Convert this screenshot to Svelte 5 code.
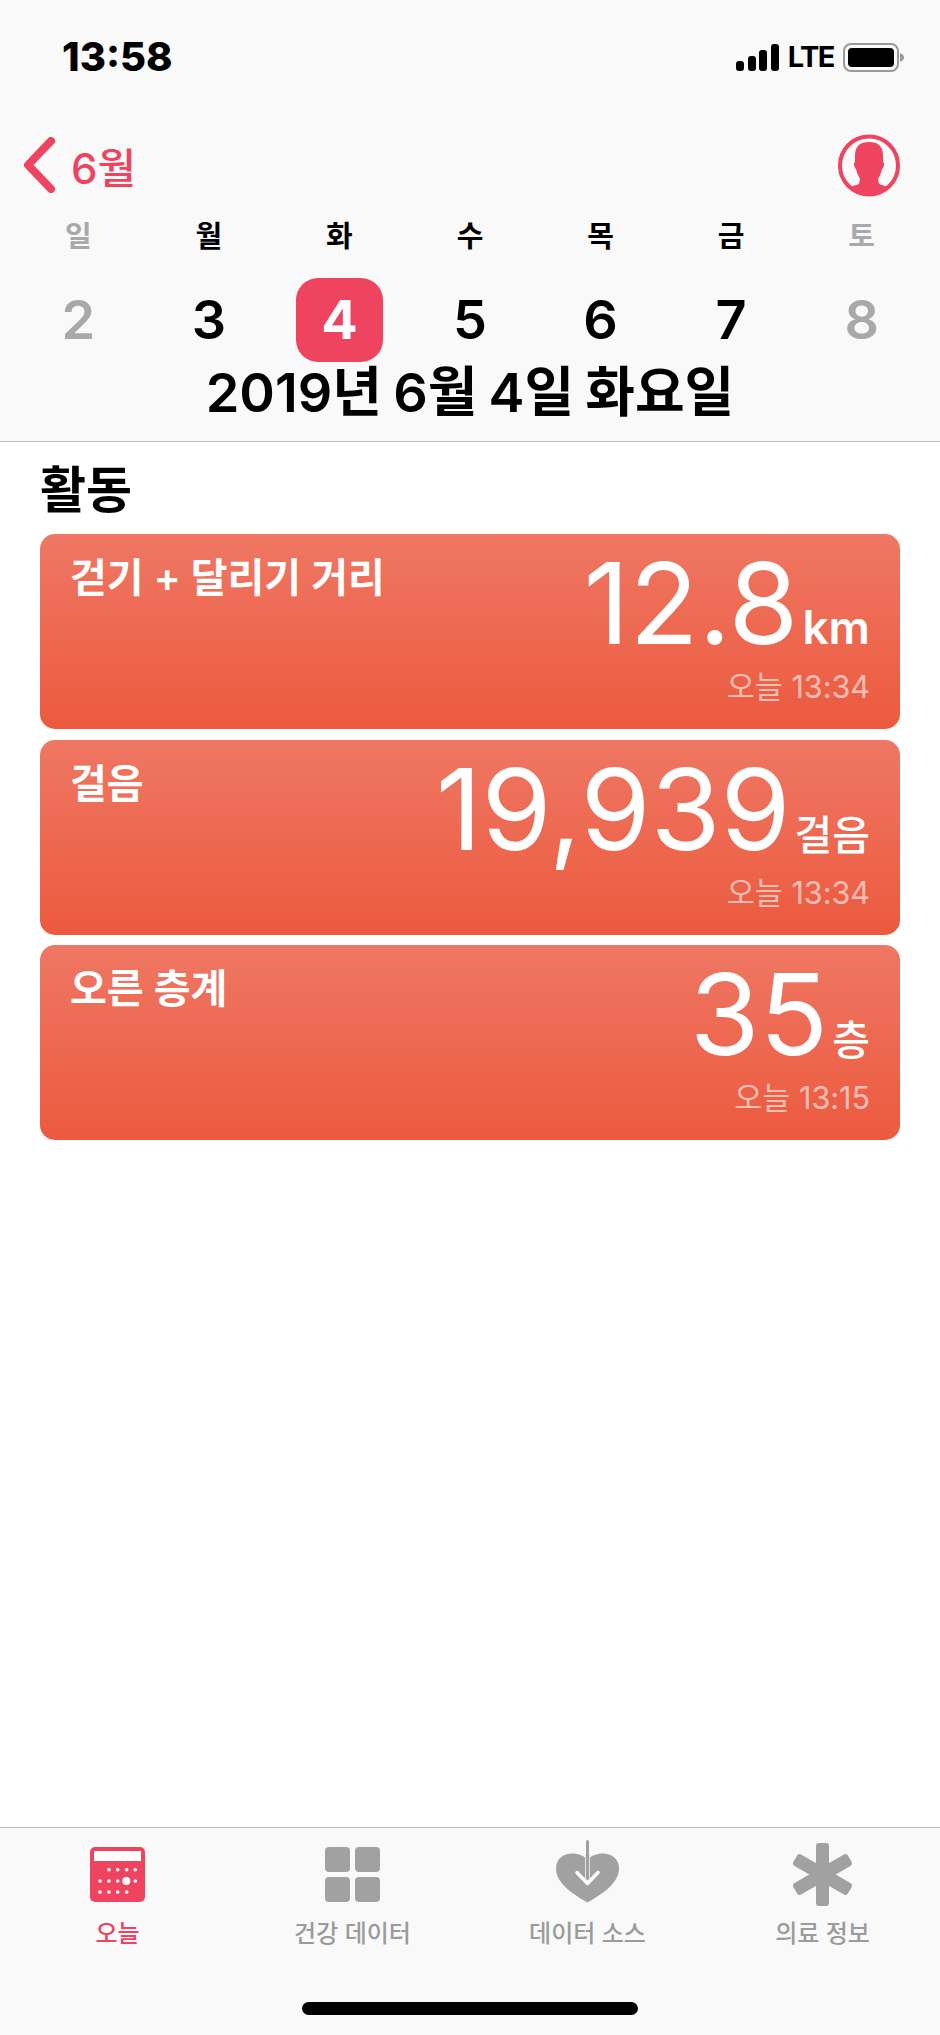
<script lang="ts">
  const weekdays = ['일', '월', '화', '수', '목', '금', '토'];
  const dates = [2, 3, 4, 5, 6, 7, 8];
  const cards = [
    { label: '걷기 + 달리기 거리', value: '12.8', unit: 'km', time: '오늘 13:34' },
    { label: '걸음', value: '19,939', unit: '걸음', time: '오늘 13:34' },
    { label: '오른 층계', value: '35', unit: '층', time: '오늘 13:15' }
  ];
  const dots = [
    [19, 22.7], [27.7, 22.7], [36.7, 22.7], [45.3, 22.7],
    [10, 34], [19, 34], [27.7, 34], [45.3, 34],
    [10, 45], [19, 45], [27.7, 45], [36.7, 45]
  ];
</script>

<div class="page">
  <header class="top">
    <div class="status">
      <span class="clock">13:58</span>
      <div class="status-right">
        <svg class="signal" width="43" height="27" viewBox="0 0 43 27" aria-hidden="true">
          <rect x="0" y="17" width="8" height="10" rx="3" />
          <rect x="12" y="12" width="8" height="15" rx="3" />
          <rect x="23" y="6" width="8" height="21" rx="3" />
          <rect x="35" y="0" width="8" height="27" rx="3" />
        </svg>
        <span class="lte">LTE</span>
        <svg class="battery" width="61" height="29" viewBox="0 0 61 29" aria-hidden="true">
          <rect x="1" y="1" width="54" height="27" rx="7" fill="none" stroke="#9a9a9a" stroke-width="2" />
          <rect x="5" y="5" width="46" height="19" rx="4" fill="#000" />
          <path d="M57 10 C60 11 61 13 61 14.5 C61 16 60 18 57 19 Z" fill="#9a9a9a" />
        </svg>
      </div>
    </div>

    <div class="nav">
      <div class="back">
        <svg width="33" height="56" viewBox="0 0 33 56" aria-hidden="true">
          <path d="M28 4 L5 28 L28 52" fill="none" stroke="#ee4460" stroke-width="8" stroke-linecap="round" stroke-linejoin="round" />
        </svg>
        <span>6월</span>
      </div>
      <svg class="avatar" width="62" height="63" viewBox="0 0 62 63" aria-hidden="true">
        <defs>
          <clipPath id="avatar-clip"><circle cx="31" cy="31.5" r="28" /></clipPath>
        </defs>
        <circle cx="31" cy="31.5" r="29" fill="#fafafa" stroke="#ee4460" stroke-width="4" />
        <path clip-path="url(#avatar-clip)" fill="#ee4460" d="M31 8 C40 8 45 12 45 22 L45 28 C47 29 46 33 44 35 C43 40 41 43 40 45 L41 50 L56 55 L56 66 L6 66 L6 55 L21 50 L22 45 C21 43 19 40 18 35 C16 33 15 29 17 28 L17 22 C17 12 22 8 31 8 Z" />
      </svg>
    </div>

    <div class="week">
      {#each weekdays as d, i}
        <span class:off={i === 0 || i === 6}>{d}</span>
      {/each}
    </div>

    <div class="dates">
      {#each dates as d, i}
        <div class="date" class:off={i === 0 || i === 6} class:today={d === 4}><span>{d}</span></div>
      {/each}
    </div>

    <h1>2019년 6월 4일 화요일</h1>
  </header>

  <main>
    <h2>활동</h2>
    <div class="cards">
      {#each cards as c}
        <section class="card">
          <div class="label">{c.label}</div>
          <div class="right">
            <div class="reading">
              <span class="value">{c.value}</span>
              <span class="unit" class:latin={c.unit === 'km'}>{c.unit}</span>
            </div>
            <div class="time">{c.time}</div>
          </div>
        </section>
      {/each}
    </div>
  </main>

  <footer class="tabs">
    <div class="tab active">
      <div class="icon">
        <svg width="55" height="55" viewBox="0 0 55 55" aria-hidden="true">
          <rect width="55" height="55" rx="5" fill="#ee4460" />
          <rect x="4" y="4" width="47" height="10" fill="#fff" />
          {#each dots as [cx, cy]}
            <circle {cx} {cy} r="1.8" fill="#fff" />
          {/each}
          <circle cx="36.3" cy="34" r="4" fill="#fff" />
        </svg>
      </div>
      <span>오늘</span>
    </div>
    <div class="tab">
      <div class="icon">
        <div class="grid-icon"><i></i><i></i><i></i><i></i></div>
      </div>
      <span>건강 데이터</span>
    </div>
    <div class="tab">
      <div class="icon">
        <svg class="heart" width="63" height="63" viewBox="0 2.5 63 63" aria-hidden="true">
          <path fill="#a1a1a1" d="M31.5 62 C20 55 0 44 0 28 C0 18 8 13 16 13 C23 13 28 15 31.5 20 C35 15 40 13 47 13 C55 13 63 18 63 28 C63 44 43 55 31.5 62 Z" />
          <path d="M31.5 14 V40" stroke="#e4e4e4" stroke-width="5" />
          <path d="M31.5 1 V38" stroke="#a1a1a1" stroke-width="3" stroke-linecap="round" />
          <path d="M21 32 L31.5 43 L42 32" fill="none" stroke="#fff" stroke-width="3.5" stroke-linecap="round" stroke-linejoin="round" />
        </svg>
      </div>
      <span>데이터 소스</span>
    </div>
    <div class="tab">
      <div class="icon">
        <svg width="63" height="63" viewBox="0 0 63 63" aria-hidden="true">
          <g fill="#a1a1a1">
            <rect x="25" y="0" width="13" height="63" rx="3" />
            <rect x="25" y="0" width="13" height="63" rx="3" transform="rotate(60 31.5 31.5)" />
            <rect x="25" y="0" width="13" height="63" rx="3" transform="rotate(-60 31.5 31.5)" />
          </g>
        </svg>
      </div>
      <span>의료 정보</span>
    </div>
    <div class="home"></div>
  </footer>
</div>

<style>
  :global(body) {
    background: #fff;
  }

  .page {
    min-height: 2035px;
    display: flex;
    flex-direction: column;
    font-family: Inter, 'Noto Sans CJK KR', sans-serif;
    color: #000;
  }

  .top {
    background: #f9f9f9;
    border-bottom: 1px solid #bdbdbd;
    padding-bottom: 18px;
  }

  .status {
    height: 133px;
    box-sizing: border-box;
    padding: 34px 36px 0 62px;
    display: flex;
    justify-content: space-between;
    align-items: flex-start;
  }
  .clock {
    font-size: 40px;
    font-weight: 800;
    line-height: 46px;
  }
  .status-right {
    display: flex;
    align-items: center;
    gap: 9px;
    height: 46px;
  }
  .signal rect {
    fill: #000;
  }
  .lte {
    font-size: 29px;
    font-weight: 700;
    line-height: 30px;
    letter-spacing: -1.5px;
  }

  .nav {
    height: 64px;
    padding: 0 40px 0 23px;
    display: flex;
    justify-content: space-between;
    align-items: center;
  }
  .back {
    display: flex;
    align-items: center;
    gap: 15px;
    color: #ee4460;
    font-size: 42px;
    font-weight: 500;
  }

  .week,
  .dates {
    display: grid;
    grid-template-columns: repeat(7, 1fr);
    padding: 0 13px;
    text-align: center;
  }
  .week {
    margin-top: 20px;
    height: 40px;
    align-items: center;
    font-size: 29px;
    font-weight: 600;
    line-height: 40px;
  }
  .off {
    color: #a9a9a9;
  }
  .dates {
    margin-top: 21px;
    justify-items: center;
  }
  .date {
    width: 87px;
    height: 84px;
    border-radius: 22px;
    display: flex;
    align-items: center;
    justify-content: center;
    font-size: 54px;
    font-weight: 600;
  }
  .date span {
    position: relative;
    top: -1px;
  }
  .date.today {
    background: #ee4460;
    color: #fff;
    font-weight: 700;
  }

  h1 {
    margin: 1px 0 0;
    height: 60px;
    line-height: 60px;
    text-align: center;
    font-size: 54px;
    font-weight: 600;
    word-spacing: -2.5px;
    white-space: nowrap;
  }

  main {
    flex: 1;
    padding: 17px 40px 0;
  }
  h2 {
    margin: 0 0 15px;
    height: 60px;
    line-height: 62px;
    font-size: 50px;
    font-weight: 700;
  }
  .cards {
    display: flex;
    flex-direction: column;
    gap: 10.5px;
  }
  .card {
    height: 195px;
    box-sizing: border-box;
    padding: 11px 30px 0;
    border-radius: 15px;
    background: linear-gradient(#ef7763, #ec5a3f);
    color: #fff;
    display: flex;
    justify-content: space-between;
    align-items: flex-start;
  }
  .label {
    margin-top: 3px;
    font-size: 40px;
    font-weight: 600;
    line-height: 60px;
  }
  .right {
    text-align: right;
  }
  .reading {
    display: flex;
    align-items: baseline;
    justify-content: flex-end;
    gap: 4px;
  }
  .value {
    font-size: 113px;
    font-weight: 370;
    line-height: 116px;
  }
  .unit {
    font-size: 41px;
    font-weight: 500;
  }
  .unit.latin {
    font-size: 46px;
    font-weight: 600;
  }
  .time {
    font-size: 30.5px;
    line-height: 36px;
    margin-top: 8px;
    color: rgba(255, 255, 255, 0.62);
  }

  .tabs {
    position: relative;
    height: 208px;
    box-sizing: border-box;
    background: #f9f9f9;
    border-top: 1px solid #bdbdbd;
    display: grid;
    grid-template-columns: repeat(4, 1fr);
    align-content: start;
  }
  .tab {
    display: flex;
    flex-direction: column;
    align-items: center;
    color: #9b9b9b;
    font-size: 24px;
    font-weight: 500;
    line-height: 30px;
  }
  .tab.active {
    color: #ee4460;
  }
  .icon {
    height: 89px;
    padding-top: 2px;
    display: flex;
    align-items: center;
  }
  .heart {
    overflow: visible;
  }
  .grid-icon {
    width: 55px;
    height: 55px;
    display: grid;
    grid-template-columns: 25px 25px;
    grid-template-rows: 25px 25px;
    gap: 5px;
  }
  .grid-icon i {
    background: #a1a1a1;
    border-radius: 4px;
  }
  .home {
    position: absolute;
    left: 302px;
    bottom: 20px;
    width: 336px;
    height: 13px;
    border-radius: 7px;
    background: #000;
  }
</style>
